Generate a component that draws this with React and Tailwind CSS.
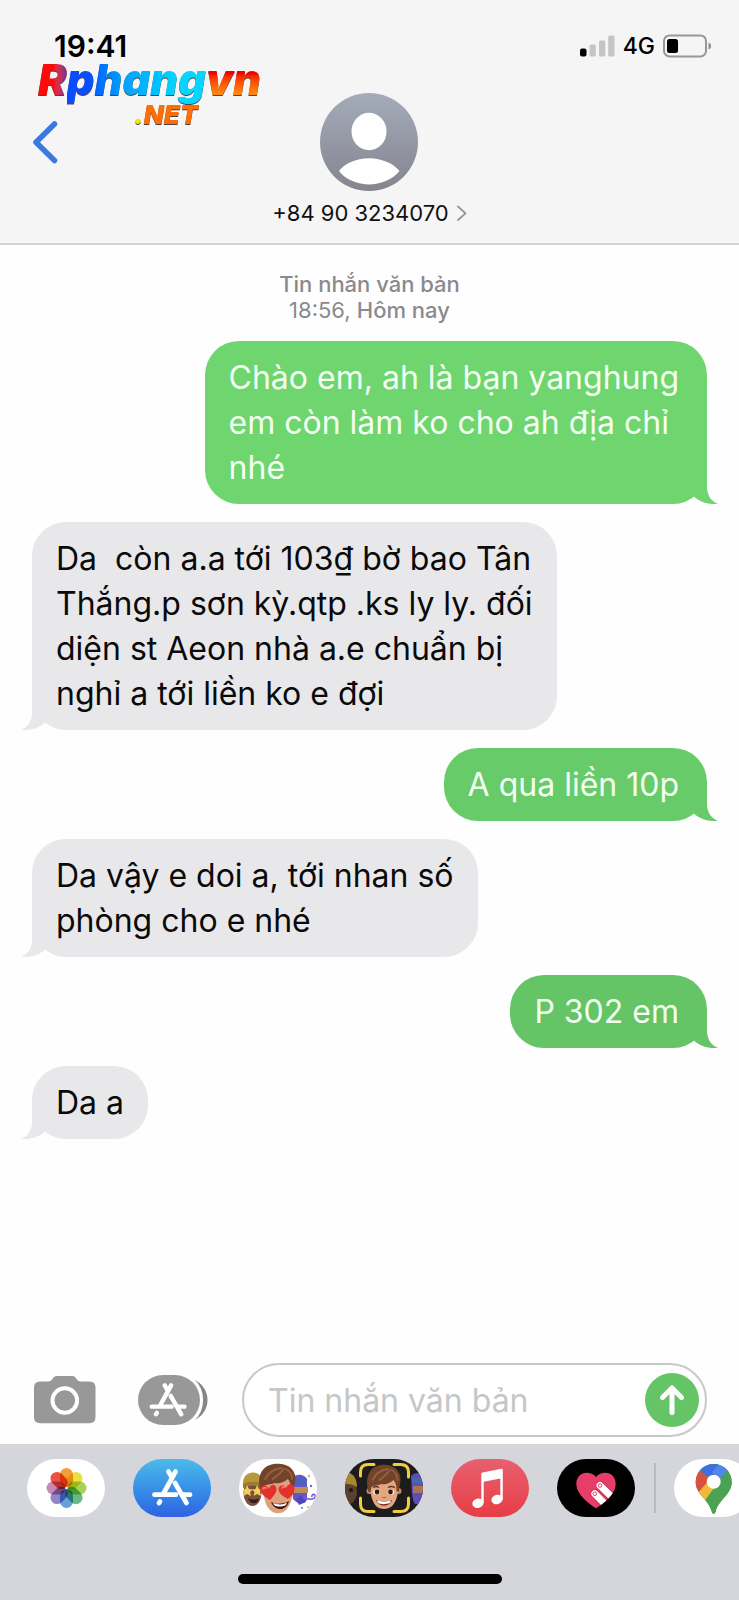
import React from "react";

const messages = [
  { id: 1, sent: true, color: "bg-[#6ed56f] text-[#6ed56f]", text: "Chào em, ah là bạn yanghung\nem còn làm ko cho ah địa chỉ\nnhé" },
  { id: 2, sent: false, color: "bg-[#e8e8ea] text-[#e8e8ea]", text: "Da  còn a.a tới 103₫ bờ bao Tân\nThắng.p sơn kỳ.qtp .ks ly ly. đối\ndiện st Aeon nhà a.e chuẩn bị\nnghỉ a tới liền ko e đợi" },
  { id: 3, sent: true, color: "bg-[#68cb69] text-[#68cb69]", text: "A qua liền 10p" },
  { id: 4, sent: false, color: "bg-[#e8e8ea] text-[#e8e8ea]", text: "Da vậy e doi a, tới nhan số\nphòng cho e nhé" },
  { id: 5, sent: true, color: "bg-[#65c466] text-[#65c466]", text: "P 302 em" },
  { id: 6, sent: false, color: "bg-[#e8e8ea] text-[#e8e8ea]", text: "Da a" },
];

function Bubble({ message }) {
  const { sent, color, text } = message;
  return (
    <div className={sent ? "flex justify-end" : "flex justify-start"}>
      <div className={`relative rounded-[34px] py-[14px] pl-6 ${sent ? "pr-7" : "pr-6"} ${color}`}>
        <svg
          viewBox="0 0 42 40"
          className={sent ? "absolute bottom-0 -right-3 w-[42px] h-10" : "absolute bottom-0 -left-3 w-[42px] h-10 -scale-x-100"}
          fill="currentColor"
          aria-hidden="true"
        >
          <path d="M30 2V23C30 31 34 37 41 40C32 40.600 23 38.500 17 32.500L8 18V2Z" />
        </svg>
        <p className={`relative whitespace-pre-wrap text-[32px] leading-[45px] ${sent ? "text-[#f3fff2]" : "text-[#0a0a0a]"}`}>{text}</p>
      </div>
    </div>
  );
}

function StatusBar() {
  return (
    <div className="flex items-center justify-between h-11 pl-[54px] pr-7">
      <span className="text-[30px] leading-9 font-semibold text-black">19:41</span>
      <div className="flex items-center gap-2">
        <svg className="w-[35px] h-[22px]" viewBox="0 0 35 22" fill="#c5c5c5" aria-hidden="true">
          <rect x="0" y="13.5" width="6.5" height="8" rx="2" fill="#000" />
          <rect x="9.5" y="9.5" width="6.3" height="12" rx="1.6" />
          <rect x="19" y="5.5" width="6.3" height="16" rx="1.6" />
          <rect x="28.2" y="0.5" width="6.3" height="21" rx="1.6" />
        </svg>
        <span className="text-[23px] font-medium text-black">4G</span>
        <svg className="w-12 h-6" viewBox="0 0 48 24" aria-hidden="true">
          <rect x="1" y="1.4" width="42" height="21" rx="5.5" fill="none" stroke="#979797" strokeWidth="2" />
          <rect x="4" y="5" width="11" height="14" rx="2.5" fill="#000" />
          <path d="M45.500 8.500C49 10 49 14 45.500 15.500Z" fill="#8e8e8e" />
        </svg>
      </div>
    </div>
  );
}

function Watermark() {
  return (
    <div className="absolute left-[38px] top-[58px] font-black italic select-none drop-shadow-[0_1px_0_rgba(40,20,20,0.8)]">
      <div className="text-[43px] leading-[43px] whitespace-nowrap">
        <span className="bg-linear-to-r from-[#ff0a0a] from-55% to-[#7a2a8c] bg-clip-text text-transparent">R</span>
        <span className="bg-linear-to-r from-[#0a4cff] from-15% via-[#08a0fb] via-40% to-[#05d5ff] to-80% bg-clip-text text-transparent">phang</span>
        <span className="bg-linear-to-b from-[#f50000] from-40% to-[#ff8a10] to-80% bg-clip-text text-transparent pr-1">vn</span>
      </div>
      <div className="pl-24 text-[26px] leading-7">
        <span className="text-[#f2e205]">.</span>
        <span className="text-[#ff6d05]">NET</span>
      </div>
    </div>
  );
}

function Header() {
  return (
    <header className="relative bg-[#f5f5f5] border-b-2 border-[#d3d3d3] pt-6 pb-4">
      <StatusBar />
      <Watermark />
      <div className="grid grid-cols-3 items-start mt-[25px]">
        <button type="button" aria-label="Quay lại" className="justify-self-start ml-8 mt-7">
          <svg className="w-7 h-11" viewBox="0 0 28 44" fill="none" stroke="#3a79df" strokeWidth="5.500" strokeLinecap="round" strokeLinejoin="round">
            <path d="M22.500 3L4 21.300L22.500 39.500" />
          </svg>
        </button>
        <button type="button" className="flex flex-col items-center gap-2">
          <svg className="w-[98px] h-[98px]" viewBox="0 0 98 98" aria-hidden="true">
            <defs>
              <linearGradient id="avatar" x1="0" y1="0" x2="0" y2="1">
                <stop offset="0" stopColor="#a4abb9" />
                <stop offset="1" stopColor="#84858f" />
              </linearGradient>
            </defs>
            <circle cx="49" cy="49" r="49" fill="url(#avatar)" />
            <ellipse cx="49" cy="38.500" rx="17.500" ry="18.700" fill="#fff" />
            <path d="M19 78C24 71 36 65.300 49 65.300S74 71 79.500 78C72 87 60 91.400 49 91.400S26 87 19 78Z" fill="#fff" />
          </svg>
          <span className="flex items-center gap-2 whitespace-nowrap text-[22px] leading-7 text-[#111]">
            +84 90 3234070
            <svg className="w-[10px] h-4" viewBox="0 0 10 16" fill="none" stroke="#96969a" strokeWidth="1.800" strokeLinecap="round" strokeLinejoin="round" aria-hidden="true">
              <path d="M1 1.500L8.500 8.300L1 15" />
            </svg>
          </span>
        </button>
      </div>
    </header>
  );
}

// the crossed sticks of the App Store mark, 40 x 36
function StoreMark() {
  return (
    <g fill="none" stroke="#fff" strokeWidth="4.800" strokeLinecap="round">
      <path d="M23.500 2.600L11.500 24.500" />
      <path d="M16.500 2.600L20 8.500" />
      <path d="M23 14L34.500 34" />
      <path d="M2.500 25.700H24" />
      <path d="M31 25.700H38" />
      <path d="M8 32.500L7 34" />
    </g>
  );
}

function Composer() {
  return (
    <form className="flex items-center pl-[34px] pr-8 pb-[7px]" onSubmit={(e) => e.preventDefault()}>
      <button type="button" aria-label="Máy ảnh" className="shrink-0">
        <svg className="w-[62px] h-12" viewBox="0 0 62 48">
          <path d="M6 5.500H14C16.500 5.500 17.500 4.500 18.500 3C19.500 1 20.500 0 23 0H38C40.500 0 41.500 1 42.500 3C43.500 4.500 44.500 5.500 47 5.500H55.500Q61.500 5.500 61.500 11.500V41Q61.500 47.200 55.500 47.200H6Q0 47.200 0 41V11.500Q0 5.500 6 5.500Z" fill="#989898" />
          <circle cx="30.800" cy="24.500" r="12.300" fill="none" stroke="#fff" strokeWidth="4" />
        </svg>
      </button>
      <button type="button" aria-label="Ứng dụng" className="shrink-0 ml-[42px]">
        <svg className="w-[70px] h-[50px]" viewBox="0 0 70 50">
          <path d="M45 0C60 1 69.500 12 69.500 25S60 49 45 50Z" fill="#868686" transform="translate(0 2) scale(1 .92)" />
          <rect x="-3" y="-3" width="68" height="56" rx="27" fill="#fff" />
          <rect x="0" y="0" width="62" height="50" rx="25" fill="#989898" />
          <g transform="translate(11.500 8) scale(.92)">
            <StoreMark />
          </g>
        </svg>
      </button>
      <div className="flex items-center flex-1 min-w-0 ml-[34px] h-[74px] pl-6 pr-[6px] border-2 border-[#c8c8c8] rounded-full bg-white">
        <label htmlFor="message" className="sr-only">Tin nhắn văn bản</label>
        <input
          id="message"
          type="text"
          placeholder="Tin nhắn văn bản"
          className="flex-1 min-w-0 h-full bg-transparent outline-none text-[32px] text-black placeholder:text-[#c6c6c8]"
        />
        <button type="submit" aria-label="Gửi" className="flex items-center justify-center shrink-0 w-[54px] h-[54px] rounded-full bg-[#65c466]">
          <svg className="w-[26px] h-8" viewBox="0 0 26 32" fill="none" stroke="#fff" strokeWidth="5" strokeLinecap="round" strokeLinejoin="round">
            <path d="M13 28.500V4M3.500 13.500L13 4L22.500 13.500" />
          </svg>
        </button>
      </div>
    </form>
  );
}

const petals = [
  ["#f39a2e", 0],
  ["#e9df3a", 45],
  ["#a5cf4e", 90],
  ["#5fb57e", 135],
  ["#5b9bdd", 180],
  ["#8d80c4", 225],
  ["#c383ae", 270],
  ["#e7493b", 315],
];

function PhotosIcon() {
  return (
    <svg viewBox="0 0 78 58" className="w-full h-full isolate">
      {petals.map(([color, angle]) => (
        <rect key={angle} x="33" y="9" width="13" height="19" rx="6.500" fill={color} opacity="0.95" transform={`rotate(${angle} 39.500 29)`} className="mix-blend-multiply" />
      ))}
    </svg>
  );
}

function StoreIcon() {
  return (
    <svg viewBox="0 0 78 58" className="w-full h-full">
      <g transform="translate(19 10)">
        <StoreMark />
      </g>
    </svg>
  );
}

const Hair = () => (
  <g>
    <path d="M-15 9C-19 -4 -15 -16 -3 -18C9 -20 18 -13 17 -2L15 9L13 8C13 4 13 1 10 -3C7 0 2 2 -2 1C-6 3 -10 2 -12 4L-13 9Z" fill="#70432a" />
    <path d="M-11 -3C-8 -9 -3 -13 4 -14M-4 -3C0 -6 4 -9 6 -13M8 -13C12 -11 14 -7 14 -3" fill="none" stroke="#95603b" strokeWidth="1.800" strokeLinecap="round" />
  </g>
);

function StickersIcon() {
  return (
    <svg viewBox="0 0 78 58" className="w-full h-full">
      {/* friend with the beanie and star eyes */}
      <ellipse cx="13.500" cy="34" rx="9" ry="13" fill="#76503b" />
      <path d="M4 27C3 17 9 13 15 13.500C21 14 24 19 24 27C17 24 10 24 4 27Z" fill="#b8983d" />
      <path d="M4 25C10 22 18 22 24 25V29C18 26 10 26 4 29Z" fill="#9a7e2e" />
      <path d="M8 26L10 30L14 30.500L11 33L12 37L8 35L4.500 37L5.500 33L3 30.500L6.500 30Z" fill="#f1ce55" />
      <path d="M18 26L20 30L24 30.500L21 33L22 37L18 35L14.500 37L15.500 33L13 30.500L16.500 30Z" fill="#f1ce55" />
      <path d="M9 39C13 41 17 41 20 39C19 46 11 46 9 39Z" fill="#371c19" />
      {/* party friend */}
      <path d="M54 18C59 14 66 16 68 20V41C64 46 58 45 54 40Z" fill="#6556c8" />
      <path d="M54 20H68V25H54Z" fill="#4467bd" />
      <path d="M54 28H69V34H54Z" fill="#c28c55" />
      <path d="M64 38C69 41 75 41 76 38C77 34 72 35 73 38" fill="none" stroke="#7a5fd8" strokeWidth="1.600" />
      <path d="M57 40L62 36L67 43L60 46Z" fill="#5342bd" />
      <circle cx="70" cy="17" r="1.200" fill="#e6b33a" />
      <circle cx="72" cy="27" r="1.200" fill="#4a7be0" />
      <circle cx="69" cy="48" r="1" fill="#e6b33a" />
      <circle cx="63" cy="49" r="1" fill="#4a7be0" />
      {/* main face */}
      <path d="M24 23C24 12 54 12 54 23C55 34 53 43 48 50C44 55 36 56 31 51C25 45 24 34 24 23Z" fill="#dda17d" />
      <g transform="translate(38 23) scale(1.080 1)">
        <Hair />
      </g>
      <path d="M32 43C38 46 45 45 50 42C48 52 36 53 32 43Z" fill="#40120f" />
      <path d="M34 44C39 46 44 46 48 43.500L47 46C43 48 38 48 35 46Z" fill="#fff" />
      <path d="M31 41C24 37 19 32 22 28C25 25 29 27 30 30C31 26 35 24 37 28C39 32 35 37 31 41Z" fill="#e4312e" />
      <path d="M49 40C43 37 38 33 40 28C43 25 46 26 47 29C49 24 54 24 55 28C57 33 52 38 49 40Z" fill="#e4312e" />
      <path d="M24 30Q25 28 27 29M43 29Q44 27 46 28" stroke="#ff827a" strokeWidth="1.500" fill="none" strokeLinecap="round" />
    </svg>
  );
}

function MemojiIcon() {
  return (
    <svg viewBox="0 0 78 58" className="w-full h-full">
      <ellipse cx="1" cy="33" rx="11" ry="13" fill="#5a4030" />
      <path d="M-2 13C6 12 12 17 12 28C7 25 2 24 -2 26Z" fill="#a5882f" />
      <circle cx="6" cy="31" r="2" fill="#221712" />
      <path d="M66 17C70 12 78 14 80 17V45H70C66 40 67 26 66 17Z" fill="#5d4db4" />
      <path d="M67 19H80V24H67Z" fill="#4567b2" />
      <path d="M68 27H80V34H68Z" fill="#a67554" />
      <g fill="none" stroke="#f3cb3c" strokeWidth="3" strokeLinecap="round">
        <path d="M15.500 17V13Q15.500 5.500 23 5.500H29" />
        <path d="M49 5.500H55.500Q63.500 5.500 63.500 13V18" />
        <path d="M15.500 39V45Q15.500 52.500 23 52.500H29" />
        <path d="M49 52.500H55.500Q63.500 52.500 63.500 45V39" />
      </g>
      <circle cx="24.500" cy="32" r="3" fill="#c98761" />
      <circle cx="53.500" cy="32" r="3" fill="#c98761" />
      <path d="M25 22C25 12 53 12 53 22C54 33 52 41 48 46C44 51 35 51 31 47C26 41 25 33 25 22Z" fill="#e2a681" />
      <g transform="translate(38.500 24)">
        <Hair />
      </g>
      <path d="M28 28.500Q31 26.500 34 28.500M43 28.500Q46 26.500 50 28.500" stroke="#5b3321" strokeWidth="1.300" fill="none" />
      <ellipse cx="31.500" cy="33" rx="3.200" ry="2.600" fill="#fff" />
      <ellipse cx="46" cy="33" rx="3.200" ry="2.600" fill="#fff" />
      <circle cx="32" cy="33" r="2.400" fill="#2d1a14" />
      <circle cx="45.500" cy="33" r="2.400" fill="#2d1a14" />
      <path d="M37 38Q39 39.500 41 38" stroke="#b9724f" strokeWidth="1.400" fill="none" />
      <path d="M31 41C36 43 42 43 47 41C45 48 34 49 31 41Z" fill="#7a2420" />
      <path d="M32 41.500C36 43 42 43 46 41.500L45 44C41 45.500 36 45.500 33 44Z" fill="#fff" />
    </svg>
  );
}

function MusicIcon() {
  return (
    <svg viewBox="0 0 78 58" className="w-full h-full" fill="#fff">
      <path d="M30.300 15Q30.300 13.700 31.600 13.400L50.300 9.800Q51.800 9.600 51.800 11V40.500H49.300V19.600L32.700 22.800V44H30.300Z" />
      <ellipse cx="27" cy="44.200" rx="5.700" ry="4.600" transform="rotate(-15 27 44.200)" />
      <ellipse cx="46" cy="40.500" rx="5.700" ry="4.600" transform="rotate(-15 46 40.500)" />
    </svg>
  );
}

function HeartIcon() {
  return (
    <svg viewBox="0 0 78 58" className="w-full h-full">
      <defs>
        <clipPath id="heart">
          <path d="M39 49.300C31 44 19.300 35 19.300 25C19.300 18 24 13.700 29.500 13.700C34 13.700 37 15.500 39 18C41 15.500 44 13.700 48.500 13.700C54 13.700 58.700 18 58.700 25C58.700 35 47 44 39 49.300Z" />
        </clipPath>
      </defs>
      <g clipPath="url(#heart)">
        <rect width="78" height="58" fill="#e93d69" />
        <path d="M43 26.500L59 42M37.800 34.800L52 49" stroke="#c93357" strokeWidth="9" strokeLinecap="round" />
        <path d="M43 26.500L59 42M37.800 34.800L52 49" stroke="#fff" strokeWidth="7" strokeLinecap="round" />
        <circle cx="43" cy="26.500" r="1.800" fill="#fff" stroke="#e93d69" />
        <circle cx="37.800" cy="34.800" r="1.800" fill="#fff" stroke="#e93d69" />
      </g>
    </svg>
  );
}

function MapsIcon() {
  return (
    <svg viewBox="0 0 78 58" className="w-full h-full">
      <defs>
        <clipPath id="pin">
          <path d="M39.700 5C50 5 57.700 13 57.700 23C57.700 36 44.500 40 41.500 53Q39.700 57 37.900 53C34.900 40 21.700 36 21.700 23C21.700 13 29.500 5 39.700 5Z" />
        </clipPath>
      </defs>
      <g clipPath="url(#pin)">
        <rect width="78" height="58" fill="#4aa255" />
        <path d="M18 8L26 11.500L39.700 23L22 40L15 30Z" fill="#d8503f" />
        <path d="M39.700 16L22 36L31 44L50 23Z" fill="#f1b93a" />
        <path d="M53.500 11L60 8V40L40 58L30 42.500Z" fill="#4aa255" />
        <path d="M26 11.300L40 23L46 4H30Z" fill="#3e70df" />
        <path d="M46 4L38 13L45 21L54 11Z" fill="#5088ea" />
      </g>
      <circle cx="39.700" cy="22.700" r="7" fill="#fff" />
    </svg>
  );
}

const apps = [
  { name: "Ảnh", bg: "bg-white", Icon: PhotosIcon },
  { name: "App Store", bg: "bg-linear-to-b from-[#4cbbe8] to-[#2f62e4]", Icon: StoreIcon },
  { name: "Nhãn dán Memoji", bg: "bg-white", Icon: StickersIcon },
  { name: "Memoji", bg: "bg-[#1c1c1c]", Icon: MemojiIcon },
  { name: "Nhạc", bg: "bg-linear-to-b from-[#e8606f] to-[#e63c45]", Icon: MusicIcon },
  { name: "Digital Touch", bg: "bg-black", Icon: HeartIcon },
];

function AppDrawer() {
  return (
    <footer className="bg-[#d5d6dc] pt-[15px] pb-4 overflow-hidden">
      <div className="flex items-center pl-[27px]">
        <div className="flex gap-7">
          {apps.map(({ name, bg, Icon }) => (
            <button key={name} type="button" aria-label={name} className={`shrink-0 w-[78px] h-[58px] rounded-full overflow-hidden ${bg}`}>
              <Icon />
            </button>
          ))}
        </div>
        <div className="shrink-0 w-[2px] h-[50px] ml-[19px] mr-[18px] bg-[#b9bac0]"></div>
        <button type="button" aria-label="Google Maps" className="shrink-0 w-[78px] h-[58px] rounded-full overflow-hidden bg-white">
          <MapsIcon />
        </button>
      </div>
      <div className="w-[264px] h-[10px] mx-auto mt-[57px] rounded-full bg-black"></div>
    </footer>
  );
}

export default function App() {
  return (
    <div className="flex flex-col min-h-screen overflow-x-hidden bg-[#fefefe] font-['Inter','Liberation_Sans',sans-serif]">
      <Header />
      <main className="flex-1 px-8 pt-[26px] pb-8">
        <div className="mb-[18px] text-center text-[22px] leading-[26px] text-[#8a8a8e]">
          <p className="font-medium">Tin nhắn văn bản</p>
          <p>
            18:56, <span className="font-medium">Hôm nay</span>
          </p>
        </div>
        <div className="flex flex-col gap-[18px]">
          {messages.map((message) => (
            <Bubble key={message.id} message={message} />
          ))}
        </div>
      </main>
      <Composer />
      <AppDrawer />
    </div>
  );
}
